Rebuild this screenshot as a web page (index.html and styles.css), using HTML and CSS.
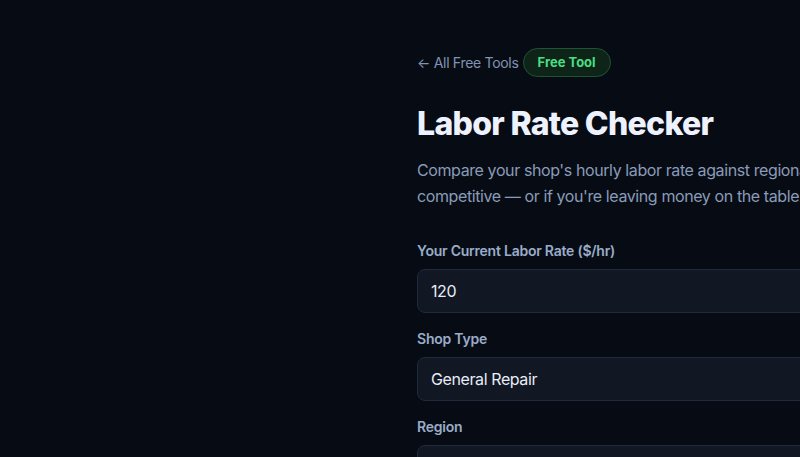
FILE: index.html
```html
<!DOCTYPE html>
<html>
<head>
    <title>Labor Rate Checker</title>
    <link rel="stylesheet" href="styles.css">
</head>
<body>
    <div class="page">
        <main class="tool">
            <div class="crumbs">
                <a class="back-link" href="#">← All Free Tools</a>
                <span class="badge">Free Tool</span>
            </div>
            <h1>Labor Rate Checker</h1>
            <p class="intro">Compare your shop's hourly labor rate against regional and national averages. See if you're competitive — or if you're leaving money on the table.</p>
            <form class="rate-form">
                <div class="field">
                    <label for="rate">Your Current Labor Rate ($/hr)</label>
                    <input type="text" id="rate" value="120">
                </div>
                <div class="field">
                    <label for="shop-type">Shop Type</label>
                    <div class="select">General Repair</div>
                </div>
                <div class="field">
                    <label for="region">Region</label>
                    <div class="select">Midwest</div>
                </div>
            </form>
        </main>
    </div>
</body>
</html>
```

FILE: styles.css
```css
html, body {
    margin: 0;
    height: 100%;
    overflow: hidden;
}
body {
    background-color: #070c14;
    color: #e2e8f0;
    font-family: Inter, "Noto Sans", sans-serif;
}
.page {
    display: flex;
    padding-top: 48px;
}
.tool {
    margin-left: 417px;
    width: 720px;
    flex-shrink: 0;
}
.crumbs {
    display: flex;
    align-items: center;
    gap: 4px;
}
.back-link {
    color: #8193b2;
    font-size: 14px;
    letter-spacing: -0.3px;
    text-decoration: none;
}
.badge {
    display: inline-block;
    height: 27px;
    line-height: 27px;
    padding: 0 14px;
    border: 1px solid #1d5436;
    border-radius: 999px;
    background-color: #0e2419;
    color: #4ade80;
    font-size: 13px;
    font-weight: 700;
}
h1 {
    margin: 27px 0 13px;
    font-size: 32px;
    line-height: 40px;
    font-weight: 800;
    letter-spacing: -0.7px;
    color: #eef2ff;
}
.intro {
    margin: 0 0 32px;
    font-size: 16px;
    line-height: 26px;
    letter-spacing: -0.4px;
    color: #8a9bb8;
}
.field {
    margin-bottom: 16px;
}
.field label {
    display: block;
    margin-bottom: 8px;
    font-size: 14px;
    line-height: 20px;
    font-weight: 600;
    letter-spacing: -0.23px;
    color: #9aacc9;
}
.field input,
.field .select {
    box-sizing: border-box;
    display: block;
    width: 100%;
    height: 44px;
    padding: 0 13px;
    border: 1px solid #1f2a3d;
    border-radius: 8px;
    background-color: #111723;
    color: #e8edf5;
    font-family: inherit;
    font-size: 16px;
    line-height: 42px;
    letter-spacing: -0.4px;
    outline: none;
}
```
